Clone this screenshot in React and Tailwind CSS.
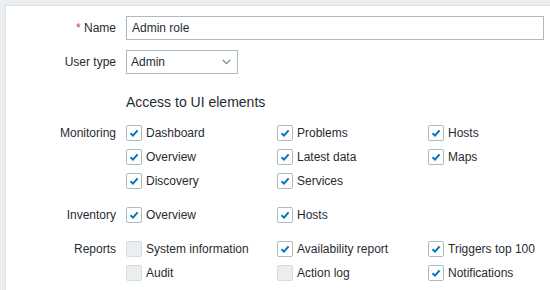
import * as React from "react"

const GROUPS = [
  {
    label: "Monitoring",
    items: [
      { label: "Dashboard", checked: true },
      { label: "Problems", checked: true },
      { label: "Hosts", checked: true },
      { label: "Overview", checked: true },
      { label: "Latest data", checked: true },
      { label: "Maps", checked: true },
      { label: "Discovery", checked: true },
      { label: "Services", checked: true },
    ],
  },
  {
    label: "Inventory",
    items: [
      { label: "Overview", checked: true },
      { label: "Hosts", checked: true },
    ],
  },
  {
    label: "Reports",
    items: [
      { label: "System information", disabled: true },
      { label: "Availability report", checked: true },
      { label: "Triggers top 100", checked: true },
      { label: "Audit", disabled: true },
      { label: "Action log", disabled: true },
      { label: "Notifications", checked: true },
    ],
  },
]

function Checkbox({ label, checked, disabled }) {
  return (
    <div className="flex h-[16px] items-center gap-[4px]">
      <span
        className={`flex h-[16px] w-[16px] shrink-0 items-center justify-center rounded-[2px] border ${
          disabled ? "border-[#d5dbdf] bg-[#ebeef0]" : "border-[#acbbc2] bg-white"
        }`}
      >
        {checked && (
          <svg width="12" height="12" viewBox="0 0 12 12">
            <path d="M2.5 6.2 L5 8.6 L9.6 3.4" fill="none" stroke="#0275b8" strokeWidth="2" />
          </svg>
        )}
      </span>
      <span className="whitespace-nowrap leading-[16px]">{label}</span>
    </div>
  )
}

export default function App() {
  return (
    <div className="h-[290px] w-[550px] overflow-hidden bg-[#ebeef0] pl-[5px] pt-[5px] font-['Liberation_Sans',Arial,sans-serif] text-[12px] text-[#1f2c33]">
      <div className="h-full border-l border-t border-[#dfe4e7] bg-white pt-[10px]">
        <div className="flex items-center gap-[10px]">
          <div className="w-[110px] shrink-0 text-right">
            <span className="text-[#e33734]">*</span> Name
          </div>
          <div className="flex h-[24px] w-[418px] shrink-0 items-center border border-[#acbbc2] px-[5px]">Admin role</div>
        </div>

        <div className="mt-[10px] flex items-center gap-[10px]">
          <div className="w-[110px] shrink-0 text-right">User type</div>
          <div className="flex h-[24px] w-[112px] shrink-0 items-center justify-between border border-[#acbbc2] pl-[4px] pr-[6px]">
            <span>Admin</span>
            <svg width="9" height="6" viewBox="0 0 9 6">
              <path d="M0.8 1 L4.5 4.6 L8.2 1" fill="none" stroke="#768d99" strokeWidth="1.3" />
            </svg>
          </div>
        </div>

        <div className="ml-[120px] mt-[20px] text-[14px] leading-[16px]">Access to UI elements</div>

        <div className="mt-[15px] flex flex-col gap-[18px]">
          {GROUPS.map((group) => (
            <div key={group.label} className="flex gap-[10px]">
              <div className="w-[110px] shrink-0 text-right leading-[16px]">{group.label}</div>
              <div className="grid shrink-0 grid-cols-[151px_151px_151px] gap-y-[8px]">
                {group.items.map((item, i) => (
                  <Checkbox key={i} {...item} />
                ))}
              </div>
            </div>
          ))}
        </div>
      </div>
    </div>
  )
}
